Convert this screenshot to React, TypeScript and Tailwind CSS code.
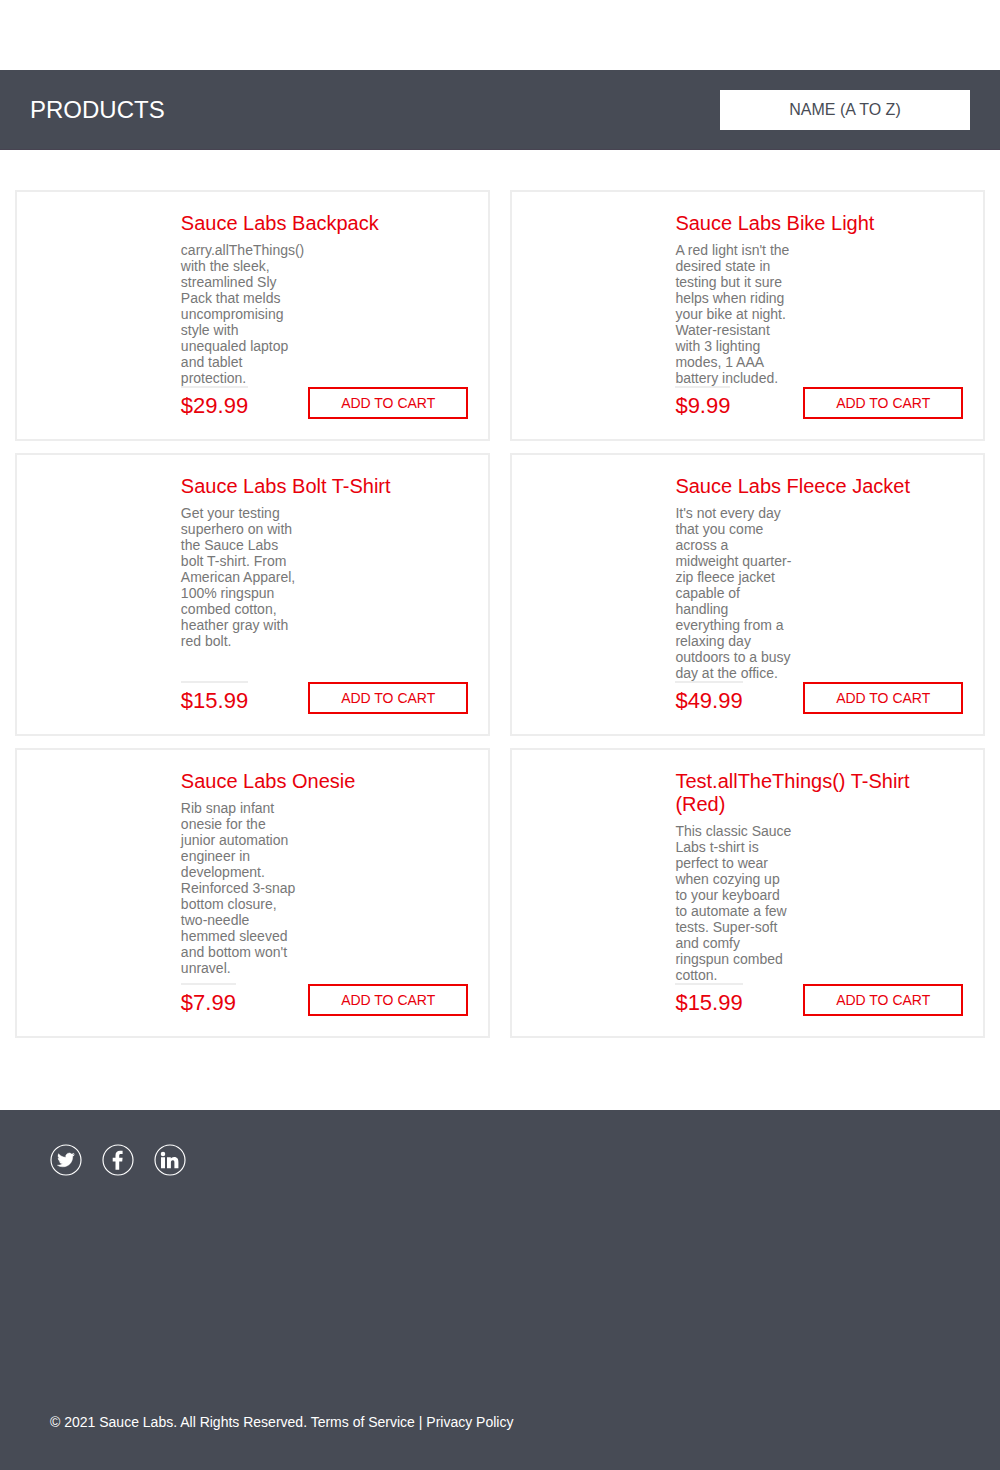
import type { ReactNode } from "react";

type Product = { name: string; text: string; price: string };

const rows: { height: string; items: Product[] }[] = [
  {
    height: "h-[251px]",
    items: [
      {
        name: "Sauce Labs Backpack",
        text: "carry.allTheThings() with the sleek, streamlined Sly Pack that melds uncompromising style with unequaled laptop and tablet protection.",
        price: "$29.99",
      },
      {
        name: "Sauce Labs Bike Light",
        text: "A red light isn't the desired state in testing but it sure helps when riding your bike at night. Water-resistant with 3 lighting modes, 1 AAA battery included.",
        price: "$9.99",
      },
    ],
  },
  {
    height: "h-[283px]",
    items: [
      {
        name: "Sauce Labs Bolt T-Shirt",
        text: "Get your testing superhero on with the Sauce Labs bolt T-shirt. From American Apparel, 100% ringspun combed cotton, heather gray with red bolt.",
        price: "$15.99",
      },
      {
        name: "Sauce Labs Fleece Jacket",
        text: "It's not every day that you come across a midweight quarter-zip fleece jacket capable of handling everything from a relaxing day outdoors to a busy day at the office.",
        price: "$49.99",
      },
    ],
  },
  {
    height: "h-[290px]",
    items: [
      {
        name: "Sauce Labs Onesie",
        text: "Rib snap infant onesie for the junior automation engineer in development. Reinforced 3-snap bottom closure, two-needle hemmed sleeved and bottom won't unravel.",
        price: "$7.99",
      },
      {
        name: "Test.allTheThings() T-Shirt (Red)",
        text: "This classic Sauce Labs t-shirt is perfect to wear when cozying up to your keyboard to automate a few tests. Super-soft and comfy ringspun combed cotton.",
        price: "$15.99",
      },
    ],
  },
];

function Card({ item, height }: { item: Product; height: string }) {
  return (
    <article
      className={`flex w-[475px] flex-col justify-between border-2 border-[#ededed] py-5 pr-5 pl-[163.85px] even:pl-[163.4px] ${height}`}
    >
      <div>
        <h2 className="text-[20px] leading-[23px] text-[#e8000b]">{item.name}</h2>
        <p className="mt-[7px] w-[118px] text-[14px] leading-4 text-[#777777]">{item.text}</p>
      </div>
      <div className="-mt-px flex items-end justify-between">
        <div className="h-[33px] border-t-2 border-[#ededed] pt-[5px] text-[22px] leading-[25px] text-[#e8000b]">
          {item.price}
        </div>
        <button className="h-8 w-40 border-2 border-[#ee0000] pl-[0.4px] text-[14px] leading-4 text-[#e8000b]">
          ADD TO CART
        </button>
      </div>
    </article>
  );
}

function Social({ children, label }: { children: ReactNode; label: string }) {
  return (
    <a aria-label={label} className="block size-8">
      <svg viewBox="0 0 32 32" width="32" height="32" fill="#fff">
        <circle cx="16" cy="16" r="15" fill="none" stroke="#fff" strokeWidth="1.15" />
        {children}
      </svg>
    </a>
  );
}

export default function App() {
  return (
    <div className="flex h-[1470px] w-[1000px] flex-col bg-white pt-[70px] font-['Liberation_Sans',Arial,sans-serif]">
      <header className="flex h-20 shrink-0 items-center justify-between border-b border-[#474351] bg-[#474b55] px-[30px]">
        <h1 className="text-[24px] leading-7 text-white">PRODUCTS</h1>
        <div className="mt-px flex h-10 w-[250px] items-center justify-center bg-white text-[16px] leading-[18px] text-[#484c55]">
          NAME (A TO Z)
        </div>
      </header>

      <main className="flex flex-col gap-3 px-[15px] pt-10">
        {rows.map((row) => (
          <div key={row.height} className="flex justify-between">
            {row.items.map((item) => (
              <Card key={item.name} item={item} height={row.height} />
            ))}
          </div>
        ))}
      </main>

      <footer className="mt-auto flex h-[360px] shrink-0 flex-col justify-between bg-[#474b55] px-[50px] pt-[34px] pb-10">
        <div className="flex gap-5">
          <Social label="Twitter">
            <path
              transform="translate(7.4 7.4) scale(.71)"
              stroke="#fff"
              strokeWidth=".6"
              d="M23.95 4.57a10 10 0 0 1-2.82.77 4.96 4.96 0 0 0 2.16-2.72c-.95.55-2 .95-3.13 1.18a4.92 4.92 0 0 0-8.38 4.48C7.69 8.1 4.07 6.13 1.64 3.16a4.92 4.92 0 0 0 1.52 6.57 4.9 4.9 0 0 1-2.23-.61v.06a4.92 4.92 0 0 0 3.95 4.83 5 5 0 0 1-2.21.08 4.94 4.94 0 0 0 4.6 3.42A9.87 9.87 0 0 1 0 19.54a13.99 13.99 0 0 0 7.55 2.21c9.05 0 14-7.5 14-13.98 0-.21 0-.42-.02-.63a9.94 9.94 0 0 0 2.42-2.57z"
            />
          </Social>
          <Social label="Facebook">
            <path d="M13.5 25.7V17.4h-2.8v-3.7h2.8v-2.4c0-3 1.7-4.6 4.5-4.6 1.2 0 2.3.1 2.6.1v3.1h-1.8c-1.3 0-1.6.7-1.6 1.6v2.2h3.4l-.4 3.7h-3v8.3z" />
          </Social>
          <Social label="LinkedIn">
            <circle cx="9" cy="9.9" r="2.25" />
            <path d="M7 13.2h4v11.1H7zM13 13.2h3.8v1.4c.6-.9 1.7-1.7 3.3-1.7 3.5 0 4.3 2.3 4.3 5.3v6.1h-4v-5.4c0-1.3 0-2.7-1.6-2.7s-1.9 1.2-1.9 2.6v5.5H13z" />
          </Social>
        </div>
        <p className="text-[14px] leading-4 text-white">
          © 2021 Sauce Labs. All Rights Reserved. Terms of Service | Privacy Policy
        </p>
      </footer>
    </div>
  );
}
